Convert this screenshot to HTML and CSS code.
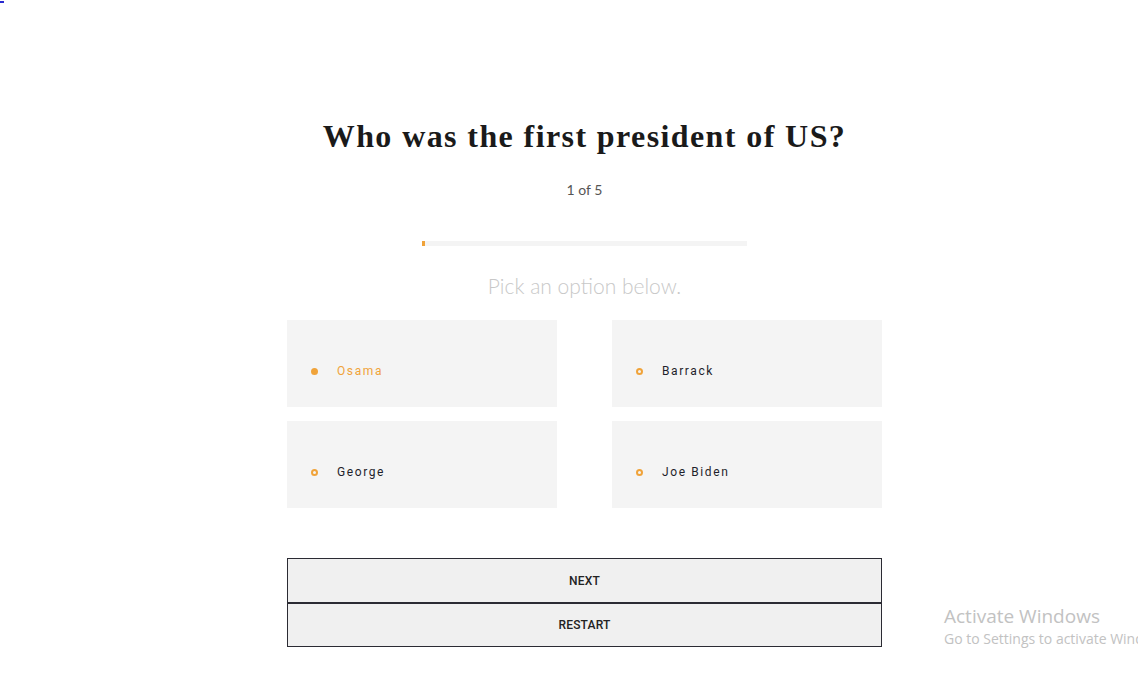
FILE: index.html
```html
<!DOCTYPE html>
<html lang="en">
<head>
<meta charset="utf-8">
<title>Quiz</title>
<link rel="stylesheet" href="styles.css">
</head>
<body>
<span class="corner-mark" aria-hidden="true"></span>
<div class="page">
  <main class="quiz" id="q">
    <h1 class="title">Who was the first president of US?</h1>
    <p class="count">1 of 5</p>
    <div class="progress"><div class="progress-fill" style="width:1%"></div></div>
    <p class="hint">Pick an option below.</p>
    <div class="options">
      <div class="option selected"><span class="dot"></span><span class="label">Osama</span></div>
      <div class="option"><span class="dot"></span><span class="label">Barrack</span></div>
      <div class="option"><span class="dot"></span><span class="label">George</span></div>
      <div class="option"><span class="dot"></span><span class="label">Joe Biden</span></div>
    </div>
    <div class="actions">
      <button class="btn">NEXT</button>
      <button class="btn">RESTART</button>
    </div>
  </main>
</div>
<div class="watermark">
  <div class="wm-title">Activate Windows</div>
  <div class="wm-sub">Go to Settings to activate Windows.</div>
</div>
</body>
</html>
```
FILE: styles.css
```css
html, body {
  margin: 0;
  padding: 0;
  background: #fff;
  overflow: hidden;
}
body {
  width: 1138px;
  height: 678px;
  position: relative;
  font-family: Roboto, "Liberation Sans", sans-serif;
}
.corner-mark {
  position: absolute;
  left: 0;
  top: 1px;
  width: 4px;
  height: 2px;
  background: #2a2ad0;
}
.page {
  width: 1169px;
  display: flex;
  justify-content: center;
}
.quiz {
  width: 595px;
  display: flex;
  flex-direction: column;
  align-items: center;
  padding-top: 117px;
}
.title {
  margin: 0;
  font-family: "Liberation Serif", serif;
  font-weight: bold;
  font-size: 32px;
  line-height: 38px;
  color: #1a1a1a;
  letter-spacing: 1.4px;
  white-space: nowrap;
}
.count {
  margin: 25px 0 0;
  font-family: Lato, sans-serif;
  font-size: 14px;
  line-height: 20px;
  color: #555;
}
.progress {
  margin-top: 41px;
  width: 325px;
  height: 5px;
  background: #f4f4f4;
}
.progress-fill {
  height: 100%;
  background: #f0a33a;
}
.hint {
  margin: 27px 0 0;
  font-family: Lato, sans-serif;
  font-weight: 300;
  font-size: 21px;
  line-height: 26px;
  color: #c8c8c8;
}
.options {
  margin-top: 21px;
  width: 100%;
  display: grid;
  grid-template-columns: 270px 270px;
  justify-content: space-between;
  row-gap: 14px;
}
.option {
  height: 87px;
  background: #f4f4f4;
  display: flex;
  align-items: center;
  padding-left: 24px;
  padding-top: 15px;
  box-sizing: border-box;
}
.dot {
  width: 7px;
  height: 7px;
  border: 2px solid #f0a33a;
  border-radius: 50%;
  box-sizing: border-box;
  margin-right: 19px;
}
.label {
  font-size: 12px;
  letter-spacing: 1.6px;
  color: #1f1f2b;
}
.selected .dot {
  background: #f0a33a;
}
.selected .label {
  color: #f0a33a;
}
.actions {
  margin-top: 50px;
  width: 100%;
  display: flex;
  flex-direction: column;
}
.btn {
  height: 45px;
  width: 100%;
  background: #f0f0f0;
  border: 1px solid #2b2b33;
  font-family: Roboto, "Liberation Sans", sans-serif;
  font-size: 12px;
  color: #222;
  font-weight: 500;
  letter-spacing: 0.2px;
  padding: 0;
}
.btn + .btn {
  margin-top: -1px;
  border-top-width: 2px;
}
.watermark {
  position: absolute;
  left: 944px;
  top: 604px;
  white-space: nowrap;
  font-family: "Open Sans", sans-serif;
  color: #c2c2c2;
}
.wm-title {
  font-size: 19px;
  line-height: 24px;
}
.wm-sub {
  font-size: 14px;
  line-height: 22px;
}
```
